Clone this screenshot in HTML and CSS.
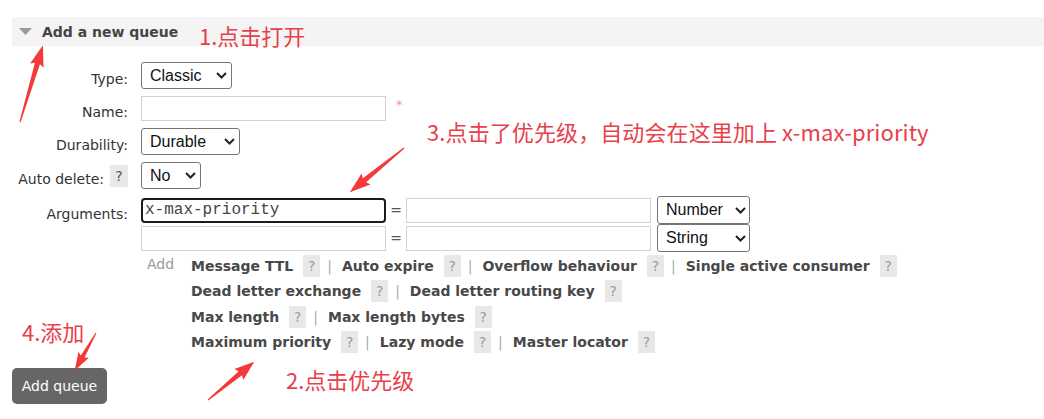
FILE: index.html
```html
<!DOCTYPE html>
<html lang="zh-CN">
<head>
<meta charset="utf-8">
<title>Add a new queue</title>
<link rel="stylesheet" href="styles.css">
</head>
<body>
<div class="page">
  <div class="section-head">
    <svg class="tri" width="13" height="7" viewBox="0 0 13 7"><polygon points="0,0 13,0 6.5,7" fill="#9a9a9a"/></svg>
    <span class="head-title">Add a new queue</span>
  </div>

  <div class="form">
    <div class="label">Type:</div>
    <div class="ctl"><div class="sel w-classic"><span>Classic</span><svg class="chev" width="11" height="7" viewBox="0 0 11 7"><polyline points="1,1 5.5,5.5 10,1" fill="none" stroke="#222" stroke-width="2"/></svg></div></div>

    <div class="label">Name:</div>
    <div class="ctl"><div class="inp"></div><span class="req">*</span></div>

    <div class="label">Durability:</div>
    <div class="ctl"><div class="sel w-durable"><span>Durable</span><svg class="chev" width="11" height="7" viewBox="0 0 11 7"><polyline points="1,1 5.5,5.5 10,1" fill="none" stroke="#222" stroke-width="2"/></svg></div></div>

    <div class="label">Auto delete:<span class="q q-label">?</span></div>
    <div class="ctl"><div class="sel w-no"><span>No</span><svg class="chev" width="11" height="7" viewBox="0 0 11 7"><polyline points="1,1 5.5,5.5 10,1" fill="none" stroke="#222" stroke-width="2"/></svg></div></div>

    <div class="label label-top">Arguments:</div>
    <div class="args">
      <div class="arg-row">
        <div class="inp focus">x-max-priority</div>
        <span class="eq">=</span>
        <div class="inp"></div>
        <div class="sel w-type"><span>Number</span><svg class="chev" width="11" height="7" viewBox="0 0 11 7"><polyline points="1,1 5.5,5.5 10,1" fill="none" stroke="#222" stroke-width="2"/></svg></div>
      </div>
      <div class="arg-row">
        <div class="inp"></div>
        <span class="eq">=</span>
        <div class="inp"></div>
        <div class="sel w-type"><span>String</span><svg class="chev" width="11" height="7" viewBox="0 0 11 7"><polyline points="1,1 5.5,5.5 10,1" fill="none" stroke="#222" stroke-width="2"/></svg></div>
      </div>
      <div class="add-row">
        <span class="add-word">Add</span>
        <div class="links">
          <div class="line"><span class="lk">Message TTL</span><span class="q">?</span><span class="sep">|</span><span class="lk">Auto expire</span><span class="q">?</span><span class="sep">|</span><span class="lk">Overflow behaviour</span><span class="q">?</span><span class="sep">|</span><span class="lk">Single active consumer</span><span class="q">?</span></div>
          <div class="line"><span class="lk">Dead letter exchange</span><span class="q">?</span><span class="sep">|</span><span class="lk">Dead letter routing key</span><span class="q">?</span></div>
          <div class="line"><span class="lk">Max length</span><span class="q">?</span><span class="sep">|</span><span class="lk">Max length bytes</span><span class="q">?</span></div>
          <div class="line"><span class="lk">Maximum priority</span><span class="q">?</span><span class="sep">|</span><span class="lk">Lazy mode</span><span class="q">?</span><span class="sep">|</span><span class="lk">Master locator</span><span class="q">?</span></div>
        </div>
      </div>
    </div>
  </div>

  <button class="btn" type="button">Add queue</button>
</div>

<div class="note note-1">1.点击打开</div>
<div class="note note-2">2.点击优先级</div>
<div class="note note-3">3.点击了优先级，自动会在这里加上 x-max-priority</div>
<div class="note note-4">4.添加</div>

<svg class="arrows" width="1044" height="419" viewBox="0 0 1044 419">
  <g fill="#f23a3a">
    <polygon transform="translate(20,122) rotate(-73.4)" points="0,-0.6 61,-2.6 59,-7 80,0 59,7 61,2.6 0,0.6"/>
    <polygon transform="translate(404,148) rotate(140.8)" points="0,-0.6 51,-2.6 49,-7 70,0 49,7 51,2.6 0,0.6"/>
    <polygon transform="translate(208,400) rotate(-39.6)" points="0,-0.6 42,-2.6 40,-7 60,0 40,7 42,2.6 0,0.6"/>
    <polygon transform="translate(96,333) rotate(119.6)" points="0,-0.5 27,-2.2 25,-6 43,0 25,6 27,2.2 0,0.5"/>
  </g>
</svg>
</body>
</html>
```

FILE: styles.css
```css
html, body {
  margin: 0;
  padding: 0;
  background: #fff;
}
body {
  width: 1044px;
  height: 419px;
  overflow: hidden;
  position: relative;
  font-family: "DejaVu Sans", Verdana, sans-serif;
  font-size: 14px;
  color: #333;
}
.page {
  padding: 17px 0 0 12px;
}
.section-head {
  height: 29px;
  background: #f4f4f4;
  display: flex;
  align-items: center;
  padding-left: 7px;
}
.tri {
  display: block;
  margin-right: 10px;
}
.head-title {
  font-weight: bold;
  color: #444;
}
.form {
  margin-top: 16px;
  display: grid;
  grid-template-columns: 116px 1fr;
  column-gap: 13px;
  row-gap: 7px;
  align-items: center;
}
.label {
  text-align: right;
  padding-top: 7px;
  color: #333;
  white-space: nowrap;
  display: flex;
  justify-content: flex-end;
  align-items: center;
}
.label-top {
  align-self: start;
  padding-top: 10px;
}
.ctl {
  display: flex;
  align-items: flex-start;
}
.sel {
  box-sizing: border-box;
  height: 27px;
  border: 1px solid #767676;
  border-radius: 3px;
  background: #fff;
  display: flex;
  align-items: center;
  justify-content: space-between;
  padding: 0 4px 0 8px;
  font-family: "Liberation Sans", Arial, sans-serif;
  font-size: 16px;
  color: #111;
}
.chev { display: block; }
.w-classic { width: 91px; }
.w-durable { width: 99px; }
.w-no { width: 60px; }
.w-type { width: 93px; height: 28px; padding-right: 3px; margin-left: 6px; }
.inp {
  box-sizing: border-box;
  width: 245px;
  height: 25px;
  border: 1px solid #d2d2d2;
  background: #fff;
}
.inp + .inp { width: 246px; }
.inp.focus {
  border: 2px solid #1a1a1a;
  border-radius: 4px;
  font-family: "Liberation Mono", "Courier New", monospace;
  font-size: 16px;
  color: #444;
  padding-left: 2px;
  line-height: 20px;
}
.req {
  color: #f29a9a;
  font-size: 13px;
  margin-left: 10px;
  margin-top: 1px;
}
.q {
  display: inline-block;
  box-sizing: border-box;
  width: 17px;
  height: 22px;
  line-height: 22px;
  text-align: center;
  background: #e8e8e8;
  color: #9a9a9a;
  margin-left: 10px;
  font-weight: normal;
}
.q-label {
  width: 18px;
  margin-left: 6px;
  color: #555;
  margin-top: -6px;
}
.args {
  display: flex;
  flex-direction: column;
}
.arg-row {
  display: flex;
  align-items: center;
  height: 28px;
}
.eq {
  width: 20px;
  text-align: center;
  color: #555;
}
.add-row {
  display: flex;
  margin-top: 1px;
}
.add-word {
  width: 44px;
  padding-left: 6px;
  color: #9a9a9a;
  line-height: 22px;
}
.links {
  display: flex;
  flex-direction: column;
}
.line {
  display: flex;
  align-items: center;
  height: 25.5px;
  white-space: nowrap;
}
.lk {
  font-weight: bold;
  color: #484848;
}
.sep {
  color: #aaa;
  margin: 0 10px 0 7px;
}
.btn {
  display: block;
  margin-top: 13px;
  height: 36px;
  width: 95px;
  border: none;
  border-radius: 5px;
  background: #666;
  color: #fff;
  font-family: "DejaVu Sans", Verdana, sans-serif;
  font-size: 14px;
  padding: 0;
}
.note {
  position: absolute;
  font-family: "Noto Sans CJK SC", "Noto Sans", sans-serif;
  font-size: 22px;
  line-height: 22px;
  color: #e8404a;
  white-space: nowrap;
}
.note-1 { left: 199px; top: 24px; }
.note-2 { left: 286px; top: 368px; }
.note-3 { left: 427px; top: 120px; letter-spacing: 0.1px; }
.note-4 { left: 22px; top: 320px; }
.arrows {
  position: absolute;
  left: 0;
  top: 0;
  pointer-events: none;
}
```
